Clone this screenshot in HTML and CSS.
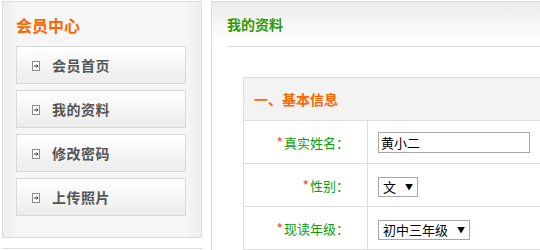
FILE: index.html
```html
<!DOCTYPE html>
<html lang="zh-CN">

<head>
    <meta charset="UTF-8">
    <meta name="viewport" content="width=device-width, initial-scale=1.0">
    <title>我的资料</title>
    <link rel="stylesheet" href="styles.css">
</head>

<body>
    <div class="wrap">
        <div class="side">
            <div class="side-box">
                <h2>会员中心</h2>
                <ul class="menu">
                    <li><a href="#"><svg class="ico" width="8" height="10" viewBox="0 0 8 10"><rect x="0.5" y="0.5" width="7" height="9" fill="#fff" stroke="#8a8a8a"/><path d="M2 5h4M4.5 3.5L6 5 4.5 6.5" stroke="#333" fill="none"/></svg>会员首页</a></li>
                    <li><a href="#"><svg class="ico" width="8" height="10" viewBox="0 0 8 10"><rect x="0.5" y="0.5" width="7" height="9" fill="#fff" stroke="#8a8a8a"/><path d="M2 5h4M4.5 3.5L6 5 4.5 6.5" stroke="#333" fill="none"/></svg>我的资料</a></li>
                    <li><a href="#"><svg class="ico" width="8" height="10" viewBox="0 0 8 10"><rect x="0.5" y="0.5" width="7" height="9" fill="#fff" stroke="#8a8a8a"/><path d="M2 5h4M4.5 3.5L6 5 4.5 6.5" stroke="#333" fill="none"/></svg>修改密码</a></li>
                    <li><a href="#"><svg class="ico" width="8" height="10" viewBox="0 0 8 10"><rect x="0.5" y="0.5" width="7" height="9" fill="#fff" stroke="#8a8a8a"/><path d="M2 5h4M4.5 3.5L6 5 4.5 6.5" stroke="#333" fill="none"/></svg>上传照片</a></li>
                </ul>
            </div>
            <div class="side-more"></div>
        </div>

        <div class="main">
            <div class="main-head">
                <h3>我的资料</h3>
            </div>
            <form class="info-form">
                <table class="info">
                    <tr>
                        <th colspan="2">一、基本信息</th>
                    </tr>
                    <tr>
                        <td class="lbl"><em>*</em>真实姓名：</td>
                        <td class="val"><input type="text" class="txt" value="黄小二"></td>
                    </tr>
                    <tr>
                        <td class="lbl"><em>*</em>性别：</td>
                        <td class="val">
                            <span class="sel sel-sex">
                                <select>
                                    <option>文</option>
                                    <option>男</option>
                                </select>
                            </span>
                        </td>
                    </tr>
                    <tr>
                        <td class="lbl"><em>*</em>现读年级：</td>
                        <td class="val">
                            <span class="sel sel-grade">
                                <select>
                                    <option>初中三年级</option>
                                    <option>初中二年级</option>
                                    <option>初中一年级</option>
                                </select>
                            </span>
                        </td>
                    </tr>
                </table>
            </form>
        </div>
    </div>
</body>

</html>
```

FILE: styles.css
```css
body {
    margin: 0;
    padding: 0;
    background-color: #fff;
    font-family: "Noto Sans CJK SC", "Liberation Sans", sans-serif;
    overflow: hidden;
}

.wrap {
    box-sizing: border-box;
    display: flex;
    align-items: flex-start;
    gap: 9px;
    width: 540px;
    height: 250px;
    padding: 1px 0 0 2px;
    overflow: hidden;
}

/* left column */
.side {
    width: 200px;
    flex: none;
}

.side-box {
    box-sizing: border-box;
    height: 237px;
    padding: 0 13px;
    border: 1px solid #dcdcdc;
    background: linear-gradient(to right, #eeeeee, #f6f6f6 8%, #f6f6f6 92%, #eeeeee);
}

.side-more {
    margin-top: 10px;
    height: 2px;
    border-top: 1px solid #dcdcdc;
}

.side h2 {
    margin: 0;
    padding-top: 13px;
    line-height: 20px;
    font-size: 16px;
    font-weight: bold;
    color: #ff6600;
}

.menu {
    list-style: none;
    margin: 11px 0 0;
    padding: 0;
}

.menu li {
    margin-bottom: 6px;
}

.menu a {
    box-sizing: border-box;
    display: flex;
    align-items: center;
    gap: 12px;
    width: 170px;
    height: 38px;
    padding-left: 15px;
    border: 1px solid #d9d9d9;
    background: linear-gradient(to bottom, #ffffff, #ececec);
    color: #555;
    font-size: 14px;
    font-weight: bold;
    letter-spacing: 0.5px;
    text-decoration: none;
}

.ico {
    display: block;
    margin-top: 1px;
}

/* right column */
.main {
    box-sizing: border-box;
    flex: 1;
    height: 249px;
    border: 1px solid #dcdcdc;
    border-right: none;
    border-bottom: none;
    background: #fff;
}

.main-head {
    background: linear-gradient(to bottom, #ebebeb, #ffffff 90%);
}

.main-head h3 {
    margin: 0 0 0 15px;
    height: 44px;
    line-height: 44px;
    border-bottom: 1px solid #dddddd;
    font-size: 14px;
    font-weight: bold;
    color: #2f9a00;
}

.info-form {
    margin: 30px 0 0 31px;
}

.info {
    width: 100%;
    border-collapse: collapse;
}

.info th,
.info td {
    height: 42px;
    padding: 0;
    border: 1px solid #dddddd;
}

.info th,
.info .val {
    border-right: none;
}

.info th {
    background-color: #f3f3f3;
    padding-left: 10px;
    text-align: left;
    font-size: 14px;
    color: #ff6600;
}

.info .lbl {
    width: 105px;
    padding-right: 18px;
    text-align: right;
    font-size: 13px;
    color: #0d9e0d;
}

.info .lbl em {
    font-style: normal;
    font-size: 14px;
    color: #ff4040;
    margin-right: 1px;
}

.info .val {
    padding-left: 10px;
}

.txt {
    box-sizing: border-box;
    display: block;
    width: 152px;
    height: 21px;
    margin: 0;
    padding: 0 2px;
    border: 1px solid #a6a6a6;
    font-family: "Noto Sans CJK SC", sans-serif;
    font-size: 13px;
    color: #000;
    outline: none;
}

.sel {
    position: relative;
    display: inline-block;
    vertical-align: middle;
}

.sel select {
    box-sizing: border-box;
    display: block;
    -webkit-appearance: none;
    appearance: none;
    height: 20px;
    margin: 0;
    padding: 0 0 0 4px;
    border: 1px solid #a6a6a6;
    border-radius: 0;
    background: #fff;
    font-family: "Noto Sans CJK SC", sans-serif;
    font-size: 13px;
    line-height: 18px;
    color: #000;
}

.sel::after {
    content: "▼";
    position: absolute;
    right: 5px;
    top: 5px;
    font-size: 8px;
    line-height: 9px;
    color: #000;
    pointer-events: none;
}

.sel-sex select {
    width: 40px;
}

.sel-grade select {
    width: 92px;
}
```
